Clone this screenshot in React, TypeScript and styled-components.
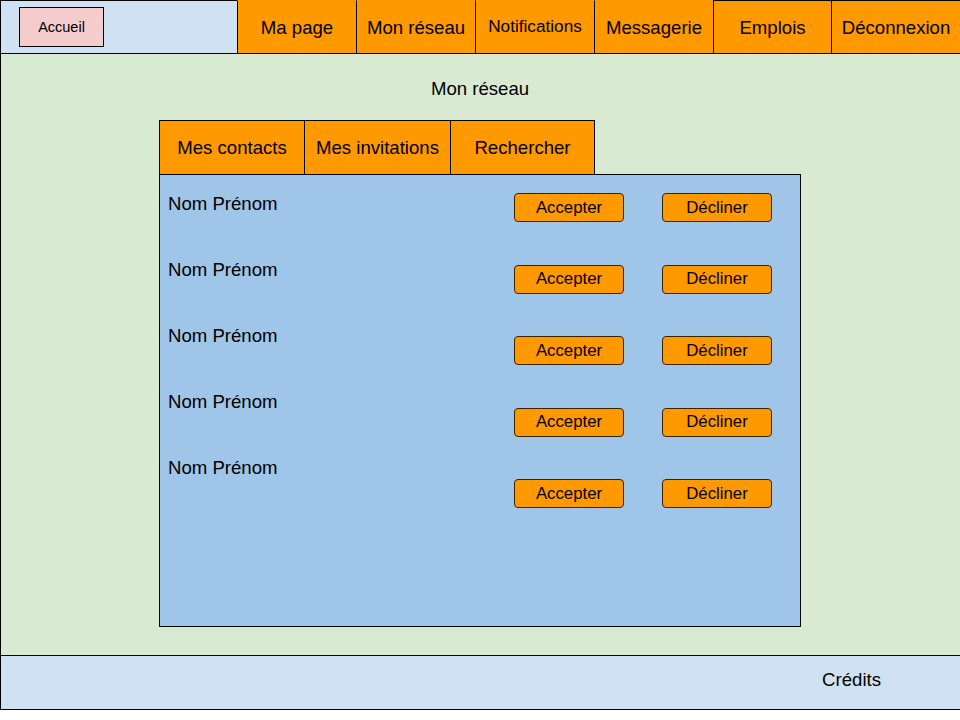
import styled, { createGlobalStyle } from "styled-components"

const GlobalStyle = createGlobalStyle`
  body {
    margin: 0;
    font-family: "Liberation Sans", Arial, sans-serif;
    color: #000;
    background: #fff;
  }
  * { box-sizing: border-box; }
`

const Page = styled.div`
  width: 960px;
  display: flex;
  flex-direction: column;
`

const Header = styled.header`
  display: flex;
  height: 54px;
  border-left: 1px solid #000;
  border-bottom: 1px solid #000;
  background: #ff9900;
`

const HomeZone = styled.div`
  width: 236px;
  background: #cfe2f3;
  border-top: 1px solid #000;
  padding: 6px 0 0 18px;
`

const HomeButton = styled.button`
  width: 85px;
  height: 40px;
  background: #f4cccc;
  border: 1px solid #000;
  font-family: inherit;
  font-size: 14.5px;
  color: #000;
  padding: 0;
`

const NavTab = styled.div<{ $w: number; $small?: boolean; $top?: boolean }>`
  width: ${(p) => p.$w}px;
  border-left: 1px solid #000;
  border-top: 1px solid ${(p) => (p.$top ? "#000" : "transparent")};
  display: flex;
  align-items: center;
  justify-content: center;
  font-size: ${(p) => (p.$small ? "17.2px" : "18.6px")};
  padding: ${(p) => (p.$small ? "0 0 2px" : "2px 0 0")};
`

const Main = styled.main`
  height: 601px;
  background: #d9ead3;
  border-left: 1px solid #000;
  padding: 24px 0 0 158px;
`

const Title = styled.h1`
  margin: 0 0 21px 0;
  width: 642px;
  text-align: center;
  font-size: 18.6px;
  font-weight: normal;
  line-height: 21px;
`

const Tabs = styled.div`
  display: flex;
`

const Tab = styled.div<{ $w: number; $first?: boolean }>`
  width: ${(p) => p.$w}px;
  height: 55px;
  background: #ff9900;
  border: 1px solid #000;
  border-left-width: ${(p) => (p.$first ? "1px" : "0")};
  display: flex;
  align-items: center;
  justify-content: center;
  font-size: 18.6px;
  margin-bottom: -1px;
`

const Panel = styled.section`
  width: 642px;
  height: 453px;
  background: #9fc5e8;
  border: 1px solid #000;
  display: grid;
  grid-template-columns: 1fr auto;
  padding: 17px 28px 0 8px;
`

const Names = styled.div`
  display: flex;
  flex-direction: column;
  gap: 45px;
  padding-top: 1px;
`

const Name = styled.div`
  font-size: 18.6px;
  line-height: 21px;
`

const Actions = styled.div`
  display: flex;
  flex-direction: column;
  gap: 42.5px;
  padding-top: 1px;
`

const ActionRow = styled.div`
  display: flex;
  gap: 38px;
`

const ActionButton = styled.button`
  width: 110px;
  height: 29px;
  background: #ff9900;
  border: 1px solid #3d2200;
  border-radius: 4px;
  font-family: inherit;
  font-size: 16.8px;
  color: #000;
  padding: 0;
`

const Footer = styled.footer`
  height: 55px;
  background: #cfe2f3;
  border: 1px solid #000;
  border-right: none;
  display: flex;
  align-items: center;
  justify-content: flex-end;
  padding: 0 79px 6px 0;
  font-size: 18.6px;
`

const navItems: { label: string; w: number; small?: boolean; top?: boolean }[] = [
  { label: "Ma page", w: 119 },
  { label: "Mon réseau", w: 119 },
  { label: "Notifications", w: 119, small: true },
  { label: "Messagerie", w: 119 },
  { label: "Emplois", w: 118, top: true },
  { label: "Déconnexion", w: 129, top: true },
]

const people = ["Nom Prénom", "Nom Prénom", "Nom Prénom", "Nom Prénom", "Nom Prénom"]

export default function App() {
  return (
    <Page>
      <GlobalStyle />
      <Header>
        <HomeZone>
          <HomeButton>Accueil</HomeButton>
        </HomeZone>
        {navItems.map((n) => (
          <NavTab key={n.label} $w={n.w} $small={n.small} $top={n.top}>
            {n.label}
          </NavTab>
        ))}
      </Header>

      <Main>
        <Title>Mon réseau</Title>
        <Tabs>
          <Tab $w={146} $first>Mes contacts</Tab>
          <Tab $w={146}>Mes invitations</Tab>
          <Tab $w={144}>Rechercher</Tab>
        </Tabs>
        <Panel>
          <Names>
            {people.map((p, i) => (
              <Name key={i}>{p}</Name>
            ))}
          </Names>
          <Actions>
            {people.map((_, i) => (
              <ActionRow key={i}>
                <ActionButton>Accepter</ActionButton>
                <ActionButton>Décliner</ActionButton>
              </ActionRow>
            ))}
          </Actions>
        </Panel>
      </Main>

      <Footer>Crédits</Footer>
    </Page>
  )
}
